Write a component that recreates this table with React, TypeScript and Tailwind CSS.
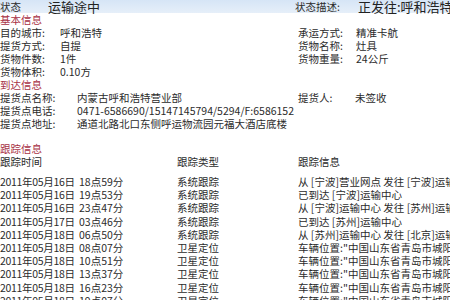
import React from 'react';

const basic = [
  ['目的城市:', '呼和浩特', '承运方式:', '精准卡航'],
  ['提货方式:', '自提', '货物名称:', '灶具'],
  ['货物件数:', '1件', '货物重量:', '24公斤'],
  ['货物体积:', '0.10方', '', ''],
];

const track = [
  ['2011年05月16日', '18点59分', '系统跟踪', '从 [宁波]营业网点 发往 [宁波]运输中心'],
  ['2011年05月16日', '19点53分', '系统跟踪', '已到达 [宁波]运输中心'],
  ['2011年05月16日', '23点47分', '系统跟踪', '从 [宁波]运输中心 发往 [苏州]运输中心'],
  ['2011年05月17日', '03点46分', '系统跟踪', '已到达 [苏州]运输中心'],
  ['2011年05月18日', '06点50分', '系统跟踪', '从 [苏州]运输中心 发往 [北京]运输中心'],
  ['2011年05月18日', '08点07分', '卫星定位', '车辆位置:"中国山东省青岛市城阳区"'],
  ['2011年05月18日', '10点51分', '卫星定位', '车辆位置:"中国山东省青岛市城阳区"'],
  ['2011年05月18日', '13点37分', '卫星定位', '车辆位置:"中国山东省青岛市城阳区"'],
  ['2011年05月18日', '16点23分', '卫星定位', '车辆位置:"中国山东省青岛市城阳区"'],
  ['2011年05月18日', '19点07分', '卫星定位', '车辆位置:"中国山东省青岛市城阳区"'],
];

const Section = ({ title }: { title: string }) => (
  <div className="h-[13px] text-[#a83246]">{title}</div>
);

export default function App() {
  return (
    <div className="w-[450px] h-[300px] overflow-hidden bg-white text-[#2b2b2b] text-[10.5px] leading-[13px] whitespace-nowrap font-['Noto_Sans_CJK_SC',sans-serif]">
      {/* status bar */}
      <div className="h-[13px] flex items-center bg-gradient-to-b from-[#d6e5f6] to-[#e6eff9]">
        <span className="w-[48px] shrink-0">状态</span>
        <span className="w-[247px] shrink-0 text-[13px] text-[#222]">运输途中</span>
        <span className="w-[63px] shrink-0">状态描述:</span>
        <span className="text-[13px] text-[#222]">正发往:呼和浩特</span>
      </div>

      <Section title="基本信息" />
      {basic.map((r, i) => (
        <div key={i} className="h-[13px] flex">
          <span className="w-[60px] shrink-0">{r[0]}</span>
          <span className="w-[238px] shrink-0">{r[1]}</span>
          <span className="w-[58px] shrink-0">{r[2]}</span>
          <span>{r[3]}</span>
        </div>
      ))}

      <Section title="到达信息" />
      <div className="h-[13px] flex">
        <span className="w-[77px] shrink-0">提货点名称:</span>
        <span className="w-[221px] shrink-0">内蒙古呼和浩特营业部</span>
        <span className="w-[57px] shrink-0">提货人:</span>
        <span>未签收</span>
      </div>
      <div className="h-[13px] flex">
        <span className="w-[77px] shrink-0">提货点电话:</span>
        <span>0471-6586690/15147145794/5294/F:6586152</span>
      </div>
      <div className="h-[13px] flex">
        <span className="w-[77px] shrink-0">提货点地址:</span>
        <span>通道北路北口东侧呼运物流园元福大酒店底楼</span>
      </div>

      <div className="h-[12px]" />
      <Section title="跟踪信息" />
      <div className="h-[13px] flex">
        <span className="w-[177px] shrink-0">跟踪时间</span>
        <span className="w-[121px] shrink-0">跟踪类型</span>
        <span>跟踪信息</span>
      </div>

      <div className="h-[7px]" />
      {track.map((r, i) => (
        <div key={i} className="h-[13.2px] leading-[13.2px] flex">
          <span className="w-[79px] shrink-0 tracking-[-0.3px]">{r[0]}</span>
          <span className="w-[98px] shrink-0">{r[1]}</span>
          <span className="w-[121px] shrink-0">{r[2]}</span>
          <span className="shrink-0">{r[3]}</span>
        </div>
      ))}
    </div>
  );
}
